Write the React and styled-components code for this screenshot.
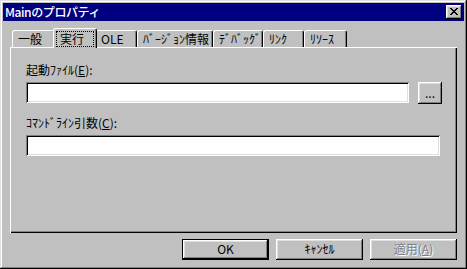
import React from "react";
import styled, { createGlobalStyle } from "styled-components";

/* Win98-style property sheet: "Mainのプロパティ" with the 実行 tab open. */

const face = "#c0c0c0";
const shade = "#808080";
const light = "#dfdfdf";

const GlobalStyle = createGlobalStyle`
  html, body {
    margin: 0;
    padding: 0;
    background: ${face};
  }
  body {
    font-family: "Noto Sans CJK JP", "Liberation Sans", sans-serif;
    font-size: 12px;
    color: #000;
  }
`;

const tabs = [
  { label: "一般", width: 43 },
  { label: "実行", width: 44, active: true },
  { label: "OLE", width: 42 },
  { label: "ﾊﾞｰｼﾞｮﾝ情報", width: 76 },
  { label: "ﾃﾞﾊﾞｯｸﾞ", width: 50 },
  { label: "ﾘﾝｸ", width: 41 },
  { label: "ﾘｿｰｽ", width: 43 },
];

const App = () => {
  return (
    <>
      <GlobalStyle />
      <Window>
        <TitleBar>
          <TitleText>Mainのプロパティ</TitleText>
          <CloseButton aria-label="close">
            <svg width="8" height="7" viewBox="0 0 8 7">
              <path
                d="M0 0h2v1h1v1h2V1h1V0h2v1H7v1H6v1H5v1h1v1h1v1h1v1H6V6H5V5H3v1H2v1H0V6h1V5h1V4h1V3H2V2H1V1H0z"
                fill="#000"
              />
            </svg>
          </CloseButton>
        </TitleBar>

        <Body>
          <TabStrip>
            {tabs.map((tab) => (
              <Tab key={tab.label} $w={tab.width} $active={tab.active}>
                {tab.active ? <FocusBox>{tab.label}</FocusBox> : tab.label}
              </Tab>
            ))}
          </TabStrip>

          <Panel>
            <FieldLabel>
              起動ﾌｧｲﾙ(<u>E</u>):
            </FieldLabel>
            <FieldRow>
              <TextBox $w={383} />
              <Button $w={24} $h={22}>
                ...
              </Button>
            </FieldRow>

            <FieldLabel $top={12}>
              ｺﾏﾝﾄﾞﾗｲﾝ引数(<u>C</u>):
            </FieldLabel>
            <FieldRow>
              <TextBox $w={414} />
            </FieldRow>
          </Panel>

          <ButtonRow>
            <Button $w={87} $default>
              OK
            </Button>
            <Button $w={87}>ｷｬﾝｾﾙ</Button>
            <Button $w={87} $disabled>
              適用(<u>A</u>)
            </Button>
          </ButtonRow>
        </Body>
      </Window>
    </>
  );
};

const bevelOut = `
  inset -1px -1px #000,
  inset 1px 1px #fff,
  inset -2px -2px ${shade},
  inset 2px 2px ${light}
`;

const bevelIn = `
  inset 1px 1px ${shade},
  inset -1px -1px #fff,
  inset 2px 2px #000,
  inset -2px -2px ${light}
`;

const Window = styled.div`
  box-sizing: border-box;
  width: 467px;
  height: 269px;
  padding: 3px;
  background: ${face};
  box-shadow: inset -1px -1px #000, inset 1px 1px ${light},
    inset -2px -2px ${shade}, inset 2px 2px #fff;
  display: flex;
  flex-direction: column;
`;

const TitleBar = styled.div`
  height: 18px;
  background: #000080;
  display: flex;
  align-items: center;
  justify-content: space-between;
  padding: 0 2px 0 2px;
`;

const TitleText = styled.span`
  color: #fff;
  font-weight: 500;
  font-size: 12px;
  line-height: 14px;
  letter-spacing: -0.4px;
`;

const CloseButton = styled.div`
  box-sizing: border-box;
  width: 16px;
  height: 14px;
  background: ${face};
  box-shadow: ${bevelOut};
  display: flex;
  align-items: center;
  justify-content: center;
  padding: 0 1px 1px 0;
`;

const Body = styled.div`
  display: flex;
  flex-direction: column;
  padding: 7px 7px 0 7px;
`;

const TabStrip = styled.div`
  display: flex;
  align-items: flex-end;
  height: 19px;
  padding-left: 2px;
  position: relative;
  z-index: 1;
`;

const Tab = styled.div`
  box-sizing: border-box;
  flex: none;
  width: ${(p) => p.$w}px;
  height: ${(p) => (p.$active ? 20 : 17)}px;
  margin: 0 ${(p) => (p.$active ? -2 : 0)}px ${(p) => (p.$active ? -1 : 0)}px;
  padding: ${(p) => (p.$active ? "2px 2px 0" : "1px 0 0 5px")};
  background: ${face};
  border-top: 1px solid #fff;
  border-left: 1px solid #fff;
  border-right: 1px solid #000;
  border-radius: 3px 3px 0 0;
  box-shadow: inset -1px 0 ${shade};
  position: relative;
  z-index: ${(p) => (p.$active ? 2 : 1)};
  line-height: 14px;
  white-space: nowrap;
`;

const FocusBox = styled.div`
  box-sizing: border-box;
  height: 16px;
  border: 1px dotted #000;
  padding: 0 0 0 3px;
  line-height: 14px;
`;

const Panel = styled.div`
  box-sizing: border-box;
  width: 447px;
  height: 186px;
  padding: 15px 0 0 15px;
  border-top: 1px solid #fff;
  border-left: 1px solid #fff;
  box-shadow: inset -1px -1px #000, inset -2px -2px ${shade};
  display: flex;
  flex-direction: column;
`;

const FieldLabel = styled.div`
  line-height: 14px;
  margin: ${(p) => p.$top || 0}px 0 5px;
  white-space: nowrap;

  u {
    text-underline-offset: 1px;
  }
`;

const FieldRow = styled.div`
  display: flex;
  align-items: flex-start;
  gap: 9px;
`;

const TextBox = styled.div`
  box-sizing: border-box;
  width: ${(p) => p.$w}px;
  height: 21px;
  background: #fff;
  box-shadow: ${bevelIn};
`;

const ButtonRow = styled.div`
  display: flex;
  justify-content: flex-end;
  gap: 7px;
  margin-top: 6px;
`;

const Button = styled.div`
  box-sizing: border-box;
  width: ${(p) => p.$w}px;
  height: ${(p) => p.$h || 21}px;
  background: ${face};
  border: ${(p) => (p.$default ? "1px solid #000" : "none")};
  box-shadow: ${bevelOut};
  display: flex;
  align-items: center;
  justify-content: center;
  line-height: 14px;
  padding-bottom: 1px;
  white-space: nowrap;
  color: ${(p) => (p.$disabled ? shade : "#000")};
  text-shadow: ${(p) => (p.$disabled ? "1px 1px #fff" : "none")};
`;

export default App;
